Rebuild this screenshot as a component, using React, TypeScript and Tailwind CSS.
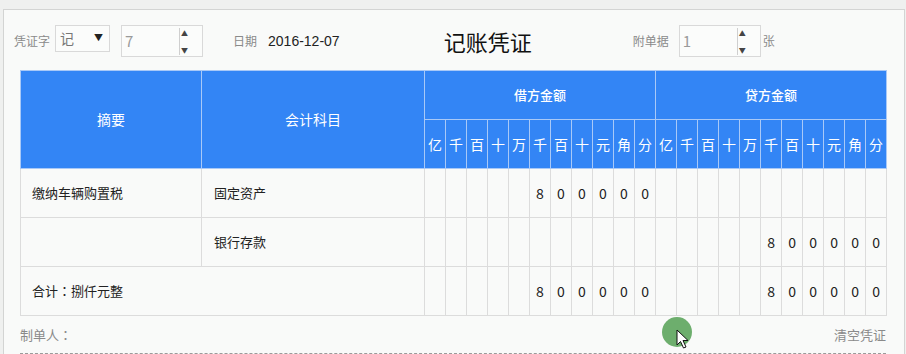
import React from 'react'

const units = ['亿', '千', '百', '十', '万', '千', '百', '十', '元', '角', '分']

// debit / credit digits for each row, aligned to the 11 unit columns
const rows: { summary: string; subject: string; debit: string[]; credit: string[] }[] = [
  {
    summary: '缴纳车辆购置税',
    subject: '固定资产',
    debit: ['', '', '', '', '', '8', '0', '0', '0', '0', '0'],
    credit: Array(11).fill(''),
  },
  {
    summary: '',
    subject: '银行存款',
    debit: Array(11).fill(''),
    credit: ['', '', '', '', '', '8', '0', '0', '0', '0', '0'],
  },
]

const total = ['', '', '', '', '', '8', '0', '0', '0', '0', '0']

const colonFont = { fontFamily: '"Noto Sans CJK TC", "Noto Sans CJK SC", sans-serif' }

function Spinner({ value }: { value: string }) {
  return (
    <div className="flex h-[32px] w-[82px] items-center border border-[#d9d9d9] bg-[#fbfcfb]">
      <span className="flex-1 pl-[3px] text-[15px] text-[#9a9a9a]">{value}</span>
      <div className="mr-[14px] flex h-[27px] flex-col items-center justify-between border-l border-[#cfcfcf] pl-[1px]">
        <span className="text-[7px] leading-[10px] text-[#444]">▲</span>
        <span className="text-[7px] leading-[10px] text-[#444]">▼</span>
      </div>
    </div>
  )
}

function DigitCell({ v, last }: { v: string; last?: boolean }) {
  return (
    <td
      className={
        'h-[49px] w-[21px] border-[#dcdcdc] p-0 text-center text-[14px] text-[#222] ' +
        (last ? 'border-b border-l border-r' : 'border-b border-l')
      }
    >
      {v}
    </td>
  )
}

export default function App() {
  return (
    <div
      className="relative h-[354px] w-[906px] overflow-hidden bg-[#eff0ef] pl-[3px] pt-[9px]"
      style={{ fontFamily: '"Noto Sans CJK SC", "Liberation Sans", sans-serif' }}
    >
      <div className="h-[400px] w-[902px] border border-[#d3d4d3] bg-[#f9faf9]">
        {/* top bar */}
        <div className="flex h-[62px] items-center pl-[10px]">
          <span className="text-[12px] text-[#8a8a8a]">凭证字</span>
          <div className="ml-[5px] flex h-[27px] w-[55px] -translate-y-[3px] items-center justify-between border border-[#d9d9d9] bg-[#fbfcfb] pl-[4px] pr-[6px]">
            <span className="text-[14px] text-[#777]">记</span>
            <span className="text-[9px] text-[#222]">▼</span>
          </div>
          <div className="ml-[11px]">
            <Spinner value="7" />
          </div>
          <span className="ml-[30px] text-[12px] text-[#8a8a8a]">日期</span>
          <span className="ml-[11px] text-[14px] text-[#222]" style={{ fontFamily: '"Liberation Sans", sans-serif' }}>
            2016-12-07
          </span>
          <span className="ml-[104px] text-[22px] text-[#111]">记账凭证</span>
          <span className="ml-[101px] text-[12px] text-[#8a8a8a]">附单据</span>
          <div className="ml-[10px]">
            <Spinner value="1" />
          </div>
          <span className="ml-[2px] text-[12px] text-[#8a8a8a]">张</span>
        </div>

        {/* voucher table */}
        <div className="ml-[16px] mt-[-2px] w-[867px]">
          <table className="w-[866px] table-fixed border-collapse">
            <colgroup>
              <col className="w-[181px]" />
              <col className="w-[223px]" />
              {Array.from({ length: 22 }).map((_, i) => (
                <col key={i} className="w-[21px]" />
              ))}
            </colgroup>
            <thead>
              <tr className="bg-[#3385f5] text-white">
                <th rowSpan={2} className="h-[98px] border border-[#a9c9f7] text-[14px] font-normal">
                  摘要
                </th>
                <th rowSpan={2} className="border border-[#a9c9f7] text-[14px] font-normal">
                  会计科目
                </th>
                <th colSpan={11} className="h-[49px] border border-[#a9c9f7] text-[13px] font-medium">
                  借方金额
                </th>
                <th colSpan={11} className="border border-[#a9c9f7] text-[13px] font-medium">
                  贷方金额
                </th>
              </tr>
              <tr className="bg-[#3385f5] text-white">
                {[...units, ...units].map((u, i) => (
                  <th key={i} className="h-[49px] border border-[#a9c9f7] p-0 text-[14px] font-normal">
                    {u}
                  </th>
                ))}
              </tr>
            </thead>
            <tbody>
              {rows.map((r, ri) => (
                <tr key={ri}>
                  <td className="border border-[#dcdcdc] pl-[11px] text-[13px] text-[#222]">{r.summary}</td>
                  <td className="border border-[#dcdcdc] pl-[12px] text-[13px] text-[#222]">{r.subject}</td>
                  {r.debit.map((v, i) => (
                    <DigitCell key={'d' + i} v={v} />
                  ))}
                  {r.credit.map((v, i) => (
                    <DigitCell key={'c' + i} v={v} last={i === 10} />
                  ))}
                </tr>
              ))}
              <tr>
                <td colSpan={2} className="border border-[#dcdcdc] pl-[11px] text-[13px] text-[#222]">
                  合计<span style={colonFont}>：</span>捌仟元整
                </td>
                {total.map((v, i) => (
                  <DigitCell key={'td' + i} v={v} />
                ))}
                {total.map((v, i) => (
                  <DigitCell key={'tc' + i} v={v} last={i === 10} />
                ))}
              </tr>
            </tbody>
          </table>

          <div className="flex h-[38px] w-[866px] items-center justify-between border-b border-dashed border-[#9a9a9a] pt-[1px]">
            <span className="text-[13px] text-[#8a8a8a]">
              制单人<span style={colonFont}>：</span>
            </span>
            <span className="text-[13px] text-[#8a8a8a]">清空凭证</span>
          </div>
        </div>
      </div>

      {/* click highlight + pointer */}
      <div className="absolute left-[662px] top-[317px] h-[30px] w-[30px] rounded-full bg-[#6dae6d]" />
      <svg className="absolute left-[676px] top-[329px]" width="14" height="20" viewBox="0 0 14 20">
        <path d="M1 1 L1 16 L4.5 12.5 L7.5 19 L10 18 L7 11.5 L12 11.5 Z" fill="#fff" stroke="#111" strokeWidth="1" />
      </svg>
    </div>
  )
}
